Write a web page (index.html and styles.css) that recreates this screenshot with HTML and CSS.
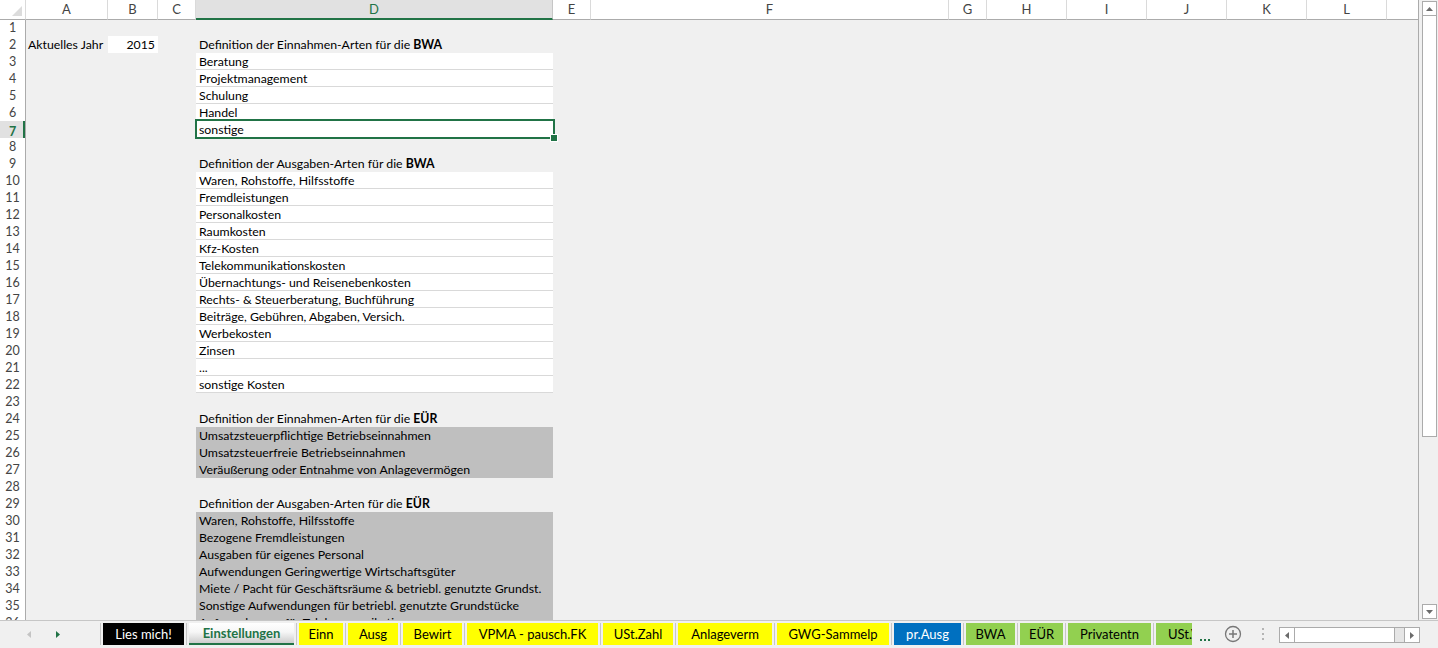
FILE: index.html
```html
<!DOCTYPE html>
<html lang="de">
<head>
<meta charset="utf-8">
<title>Einstellungen</title>
<link rel="stylesheet" href="styles.css">
</head>
<body>
<div class="app">
  <div class="main">
    <div class="sheet">
      <div class="row colhdr">
        <div class="corner"><span class="tri"></span></div>
        <div class="ch">A</div><div class="ch">B</div><div class="ch">C</div>
        <div class="ch sel">D</div>
        <div class="ch">E</div><div class="ch">F</div><div class="ch">G</div>
        <div class="ch">H</div><div class="ch">I</div><div class="ch">J</div>
        <div class="ch">K</div><div class="ch">L</div><div class="ch last"></div>
      </div>
      <div class="row"><div class="rh">1</div></div>
      <div class="row"><div class="rh">2</div><div class="cell a">Aktuelles Jahr</div><div class="cell b w num">2015</div><div class="cell d">Definition der Einnahmen-Arten für die <b>BWA</b></div></div>
      <div class="row"><div class="rh">3</div><div class="cell d w">Beratung</div></div>
      <div class="row"><div class="rh">4</div><div class="cell d w">Projektmanagement</div></div>
      <div class="row"><div class="rh">5</div><div class="cell d w">Schulung</div></div>
      <div class="row"><div class="rh">6</div><div class="cell d w">Handel</div></div>
      <div class="row"><div class="rh active">7</div><div class="cell d w">sonstige</div></div>
      <div class="row"><div class="rh">8</div></div>
      <div class="row"><div class="rh">9</div><div class="cell d">Definition der Ausgaben-Arten für die <b>BWA</b></div></div>
      <div class="row"><div class="rh">10</div><div class="cell d w">Waren, Rohstoffe, Hilfsstoffe</div></div>
      <div class="row"><div class="rh">11</div><div class="cell d w">Fremdleistungen</div></div>
      <div class="row"><div class="rh">12</div><div class="cell d w">Personalkosten</div></div>
      <div class="row"><div class="rh">13</div><div class="cell d w">Raumkosten</div></div>
      <div class="row"><div class="rh">14</div><div class="cell d w">Kfz-Kosten</div></div>
      <div class="row"><div class="rh">15</div><div class="cell d w">Telekommunikationskosten</div></div>
      <div class="row"><div class="rh">16</div><div class="cell d w">Übernachtungs- und Reisenebenkosten</div></div>
      <div class="row"><div class="rh">17</div><div class="cell d w">Rechts- &amp; Steuerberatung, Buchführung</div></div>
      <div class="row"><div class="rh">18</div><div class="cell d w">Beiträge, Gebühren, Abgaben, Versich.</div></div>
      <div class="row"><div class="rh">19</div><div class="cell d w">Werbekosten</div></div>
      <div class="row"><div class="rh">20</div><div class="cell d w">Zinsen</div></div>
      <div class="row"><div class="rh">21</div><div class="cell d w">...</div></div>
      <div class="row"><div class="rh">22</div><div class="cell d w">sonstige Kosten</div></div>
      <div class="row"><div class="rh">23</div></div>
      <div class="row"><div class="rh">24</div><div class="cell d">Definition der Einnahmen-Arten für die <b>EÜR</b></div></div>
      <div class="row"><div class="rh">25</div><div class="cell d g">Umsatzsteuerpflichtige Betriebseinnahmen</div></div>
      <div class="row"><div class="rh">26</div><div class="cell d g">Umsatzsteuerfreie Betriebseinnahmen</div></div>
      <div class="row"><div class="rh">27</div><div class="cell d g">Veräußerung oder Entnahme von Anlagevermögen</div></div>
      <div class="row"><div class="rh">28</div></div>
      <div class="row"><div class="rh">29</div><div class="cell d">Definition der Ausgaben-Arten für die <b>EÜR</b></div></div>
      <div class="row"><div class="rh">30</div><div class="cell d g">Waren, Rohstoffe, Hilfsstoffe</div></div>
      <div class="row"><div class="rh">31</div><div class="cell d g">Bezogene Fremdleistungen</div></div>
      <div class="row"><div class="rh">32</div><div class="cell d g">Ausgaben für eigenes Personal</div></div>
      <div class="row"><div class="rh">33</div><div class="cell d g">Aufwendungen Geringwertige Wirtschaftsgüter</div></div>
      <div class="row"><div class="rh">34</div><div class="cell d g">Miete / Pacht für Geschäftsräume &amp; betriebl. genutzte Grundst.</div></div>
      <div class="row"><div class="rh">35</div><div class="cell d g">Sonstige Aufwendungen für betriebl. genutzte Grundstücke</div></div>
      <div class="row"><div class="rh">36</div><div class="cell d g">Aufwendungen für Telekommunikation</div></div>

      <div class="selection"><span class="handle"></span></div>
    </div>
    <div class="vscroll">
      <div class="vs-btn"><svg width="7" height="4" viewBox="0 0 7 4"><path d="M0 4 L3.5 0 L7 4 Z" fill="#6b6b6b"/></svg></div>
      <div class="vs-thumb"></div>
      <div class="vs-track"></div>
      <div class="vs-btn"><svg width="7" height="4" viewBox="0 0 7 4"><path d="M0 0 L7 0 L3.5 4 Z" fill="#6b6b6b"/></svg></div>
    </div>
  </div>
  <div class="tabbar">
    <div class="nav">
      <svg class="nav-arrow" width="4" height="7" viewBox="0 0 4 7"><path d="M4 0 L0 3.5 L4 7 Z" fill="#c4c4c4"/></svg>
      <svg class="nav-arrow" width="4" height="7" viewBox="0 0 4 7"><path d="M0 0 L4 3.5 L0 7 Z" fill="#217346"/></svg>
    </div>
    <div class="tabs">
      <div class="tab black t-lies">Lies mich!</div><span class="sep"></span>
      <div class="tab active t-einst">Einstellungen</div><span class="sep"></span>
      <div class="tab yellow t-einn">Einn</div><span class="sep"></span>
      <div class="tab yellow t-ausg">Ausg</div><span class="sep"></span>
      <div class="tab yellow t-bewirt">Bewirt</div><span class="sep"></span>
      <div class="tab yellow t-vpma">VPMA - pausch.FK</div><span class="sep"></span>
      <div class="tab yellow t-ust">USt.Zahl</div><span class="sep"></span>
      <div class="tab yellow t-anl">Anlageverm</div><span class="sep"></span>
      <div class="tab yellow t-gwg">GWG-Sammelp</div><span class="sep"></span>
      <div class="tab blue t-pr">pr.Ausg</div><span class="sep"></span>
      <div class="tab green t-bwa">BWA</div><span class="sep"></span>
      <div class="tab green t-eur">EÜR</div><span class="sep"></span>
      <div class="tab green t-priv">Privatentn</div><span class="sep"></span>
      <div class="tab green t-cut">USt.VA</div>
    </div>
    <div class="more"><i></i><i></i><i></i></div>
    <svg class="plus" width="18" height="18" viewBox="0 0 18 18"><circle cx="9" cy="9" r="7.5" fill="none" stroke="#777" stroke-width="1.3"/><path d="M9 5 V13 M5 9 H13" stroke="#777" stroke-width="1.5"/></svg>
    <div class="vdots"><i></i><i></i><i></i></div>
    <div class="hscroll">
      <div class="hs-btn"><svg width="4" height="7" viewBox="0 0 4 7"><path d="M4 0 L0 3.5 L4 7 Z" fill="#6b6b6b"/></svg></div>
      <div class="hs-thumb"></div>
      <div class="hs-track"></div>
      <div class="hs-btn right"><svg width="4" height="7" viewBox="0 0 4 7"><path d="M0 0 L4 3.5 L0 7 Z" fill="#6b6b6b"/></svg></div>
    </div>
  </div>
</div>
</body>
</html>
```

FILE: styles.css
```css
* { box-sizing: border-box; margin: 0; padding: 0; }
html, body { width: 1438px; height: 648px; overflow: hidden; }
body {
  background: #f0f0f0;
  font-family: "Lato", "Liberation Sans", sans-serif;
  font-size: 12.3px;
  color: #000;
}
.app { display: flex; flex-direction: column; height: 648px; }
.main { display: flex; height: 620px; }

.sheet {
  position: relative;
  width: 1419px;
  height: 620px;
  border-right: 1px solid #ababab;
  overflow: hidden;
  background: #f0f0f0;
}
.row {
  display: grid;
  grid-template-columns: 26px 82px 50px 38px 357px 1fr;
  height: 17px;
}
.colhdr {
  grid-template-columns: 26px 82px 50px 38px 357px 38px 358px 38px 80px 80px 80px 80px 80px 1fr;
  height: 19px;
}
.corner {
  position: relative;
  background: #fff;
  border-right: 1px solid #dadada;
  border-bottom: 1px solid #ababab;
}
.corner .tri {
  position: absolute;
  right: 3px;
  bottom: 3px;
  width: 0;
  height: 0;
  border-left: 10px solid transparent;
  border-bottom: 10px solid #dcdcdc;
}
.ch {
  background: #fff;
  border-right: 1px solid #dadada;
  border-bottom: 1px solid #ababab;
  text-align: center;
  line-height: 18px;
  font-size: 13px;
  color: #444;
}
.ch.sel {
  background: #e1e1e1;
  color: #217346;
  border-bottom: 2px solid #217346;
  border-right-color: #c6c6c6;
}
.ch.last { border-right: none; }

.rh {
  grid-column: 1;
  background: #fff;
  border-right: 1px solid #ababab;
  border-bottom: 1px solid #dadada;
  text-align: center;
  line-height: 17px;
  font-size: 12.5px;
  color: #444;
}
.rh.active {
  background: #e1e1e1;
  color: #217346;
  box-shadow: inset -2px 0 0 #217346;
}

.cell {
  padding: 0 3px;
  line-height: 18px;
  height: 17px;
  white-space: nowrap;
  border-bottom: 1px solid transparent;
}
.cell.a { grid-column: 2; padding-left: 2px; }
.cell.b { grid-column: 3; }
.cell.d { grid-column: 5; }
.cell.num { text-align: right; }
.cell.w { background: #fff; border-bottom-color: #d9d9d9; }
.cell.b.w { border-bottom-color: transparent; }
.cell.g { background: #bfbfbf; border-bottom-color: #bfbfbf; }
.cell b { font-weight: 700; }

.selection {
  position: absolute;
  left: 195px;
  top: 119px;
  width: 360px;
  height: 20px;
  border: 2px solid #217346;
}
.selection .handle {
  position: absolute;
  right: -4px;
  bottom: -4px;
  width: 6px;
  height: 6px;
  background: #217346;
  outline: 1px solid #fff;
}

.vscroll {
  width: 19px;
  height: 620px;
  display: flex;
  flex-direction: column;
  padding: 1px 1px 1px 3px;
  background: #f0f0f0;
}
.vs-btn {
  height: 15px;
  flex: none;
  background: #fff;
  border: 1px solid #ababab;
  display: flex;
  align-items: center;
  justify-content: center;
}
.vs-thumb {
  height: 421px;
  flex: none;
  background: #fff;
  border: 1px solid #ababab;
  border-top: none;
}
.vs-track { flex: 1; }

.tabbar {
  height: 28px;
  border-top: 1px solid #c6c6c6;
  display: flex;
  align-items: flex-start;
  padding-top: 2px;
  background: #f0f0f0;
  font-size: 13px;
}
.nav {
  width: 101px;
  height: 22px;
  flex: none;
  border-right: 1px solid #c6c6c6;
  display: flex;
  align-items: center;
  padding-left: 27px;
  gap: 25px;
}
.tabs {
  display: flex;
  margin-left: 2px;
  flex: none;
}
.tab {
  height: 22px;
  line-height: 22px;
  text-align: center;
  white-space: nowrap;
  overflow: hidden;
  flex: none;
}
.sep { width: 1px; height: 22px; margin: 0 2px; background: #c6c6c6; flex: none; }
.black { background: #000; color: #fff; }
.yellow { background: #ffff00; color: #000; }
.blue { background: #0070c0; color: #fff; }
.green { background: #92d050; color: #000; }
.active {
  background: linear-gradient(to bottom, #ffffff 0%, #f6f6f6 45%, #cdcdcd 100%);
  color: #217346;
  font-weight: 700;
  border-bottom: 2px solid #217346;
  line-height: 21px;
}
.t-lies { width: 81px; }
.t-einst { width: 105px; }
.t-einn { width: 44px; }
.t-ausg { width: 50px; }
.t-bewirt { width: 59px; }
.t-vpma { width: 131px; }
.t-ust { width: 70px; }
.t-anl { width: 94px; }
.t-gwg { width: 112px; }
.t-pr { width: 67px; }
.t-bwa { width: 49px; }
.t-eur { width: 43px; }
.t-priv { width: 83px; }
.t-cut { width: 36px; text-align: left; padding-left: 12px; }

.more {
  display: flex;
  gap: 2px;
  margin: 16px 0 0 8px;
  flex: none;
}
.more i { width: 2px; height: 2px; background: #217346; display: block; }
.plus { margin: 2px 0 0 14px; flex: none; }
.vdots {
  display: flex;
  flex-direction: column;
  gap: 3px;
  margin: 5px 0 0 20px;
  flex: none;
}
.vdots i { width: 2px; height: 2px; background: #b4b4b4; display: block; }
.hscroll {
  display: flex;
  width: 141px;
  height: 16px;
  margin: 4px 0 0 15px;
  border: 1px solid #ababab;
  background: #e6e6e6;
  flex: none;
}
.hs-btn {
  width: 15px;
  background: #fff;
  border-right: 1px solid #ababab;
  display: flex;
  align-items: center;
  justify-content: center;
  flex: none;
}
.hs-btn.right { border-right: none; border-left: 1px solid #ababab; }
.hs-thumb { width: 100px; background: #fff; border-right: 1px solid #ababab; flex: none; }
.hs-track { flex: 1; }
```
